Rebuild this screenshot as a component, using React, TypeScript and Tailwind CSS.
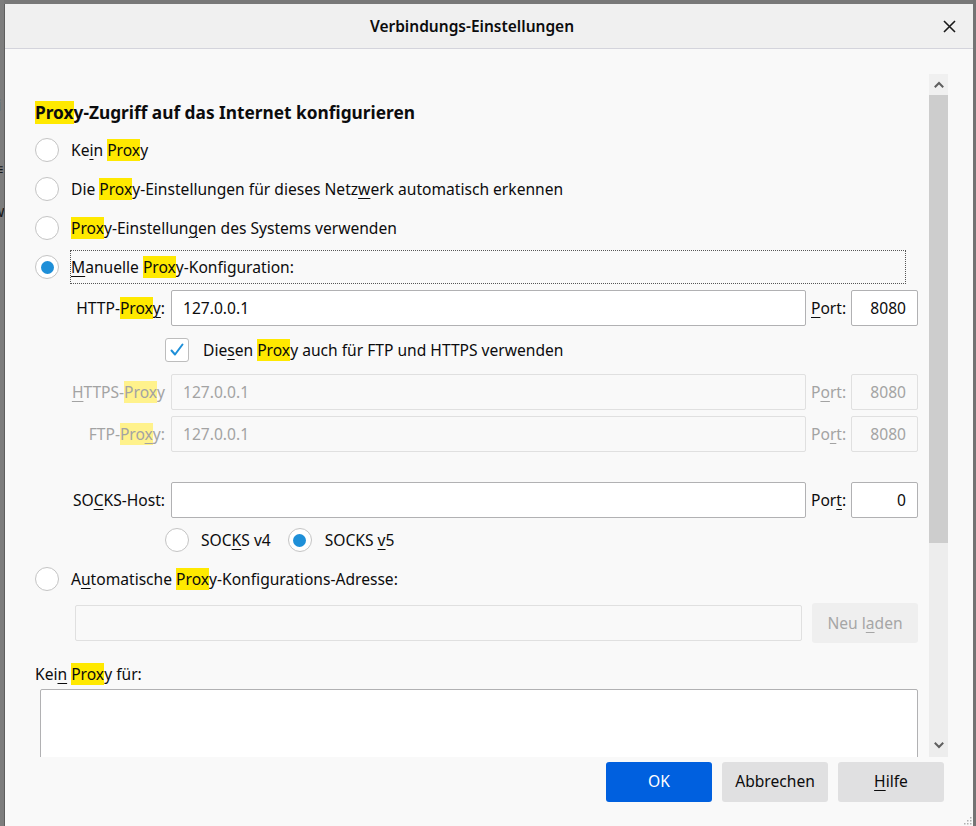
import React from 'react'

const Hl = ({ children, dim }: { children: React.ReactNode; dim?: boolean }) => (
  <span className={dim ? 'bg-[#fff28c]' : 'bg-[#ffe900]'}>{children}</span>
)

const U = ({ children }: { children: React.ReactNode }) => (
  <span className="underline decoration-1 underline-offset-[3px]">{children}</span>
)

const Radio = ({ checked }: { checked?: boolean }) => (
  <div className="w-6 h-6 shrink-0 rounded-full border border-[#c4c4c4] bg-white flex items-center justify-center">
    {checked && <div className="w-[13px] h-[13px] rounded-full bg-[#1e8fd8]" />}
  </div>
)

const Checkbox = () => (
  <div className="w-6 h-6 shrink-0 rounded-[3px] border border-[#bdbdbd] bg-white flex items-center justify-center">
    <svg width="16" height="16" viewBox="0 0 16 16" fill="none">
      <path d="M2.5 8.5 L6 12.5 L13.5 2.5" stroke="#1e8fd8" strokeWidth="2" strokeLinecap="round" strokeLinejoin="round" />
    </svg>
  </div>
)

const Field = ({ value, disabled, className }: { value?: string; disabled?: boolean; className: string }) => (
  <div
    className={`h-9 rounded-[2px] border flex items-center ${
      disabled ? 'border-[#e0e0e0] bg-[#f9f9f9] text-[#a3a3a3]' : 'border-[#b1b1b3] bg-white text-[#0c0c0d]'
    } ${className}`}
  >
    {value}
  </div>
)

const ProxyRow = ({
  label,
  port,
  portLabel,
  value,
  disabled,
}: {
  label: React.ReactNode
  port: string
  portLabel: React.ReactNode
  value?: string
  disabled?: boolean
}) => (
  <div className={`h-9 flex items-center ${disabled ? 'text-[#a3a3a3]' : 'text-[#0c0c0d]'}`}>
    <div className="w-[130px] text-right whitespace-nowrap">{label}</div>
    <Field value={value} disabled={disabled} className="ml-[6px] w-[635px] pl-[11px]" />
    <div className="w-[35px] ml-[5px] whitespace-nowrap">{portLabel}</div>
    <Field value={port} disabled={disabled} className="ml-[5px] w-[67px] justify-end pr-[11px]" />
  </div>
)

const Chevron = ({ up }: { up?: boolean }) => (
  <svg width="10" height="7" viewBox="0 0 10 7" fill="none">
    <path
      d={up ? 'M1.5 5.5 L5 2 L8.5 5.5' : 'M1.5 1.5 L5 5 L8.5 1.5'}
      stroke="#5f5f5f"
      strokeWidth="2"
      strokeLinecap="square"
    />
  </svg>
)

export default function App() {
  return (
    <div className="w-[976px] h-[826px] bg-[#787878] flex overflow-hidden font-['Noto_Sans',sans-serif] text-[#0c0c0d]">
      <div className="w-[4px] shrink-0 overflow-hidden bg-[#7d7d7d] text-[#1a1a1a] text-[16px] leading-none">
        <div className="mt-[97px] -ml-[3px]">i</div>
        <div className="mt-[48px] -ml-[6px]">≡</div>
        <div className="mt-[26px] -ml-[8px]">w</div>
      </div>
      <div className="w-[969px] mt-[4px] bg-[#f9f9f9] border-l border-[#5e5e5e] rounded-tr-[3px] flex flex-col">
        <div className="h-[45px] shrink-0 bg-[#f0f0f0] border-b border-[#d4d4dc] flex items-center relative">
          <div className="flex-1 text-center text-[15.5px] font-semibold pr-[34px] pt-[2px]">Verbindungs-Einstellungen</div>
          <svg className="absolute right-[17px] top-[16px]" width="13" height="13" viewBox="0 0 13 13">
            <path d="M1 1 L12 12 M12 1 L1 12" stroke="#1a1a1a" strokeWidth="1.6" />
          </svg>
        </div>

        <div className="flex mt-[25px] h-[683px] shrink-0 overflow-hidden">
          <div className="flex-1 pl-[30px] text-[15.6px] leading-[22px] flex flex-col">
            <div className="mt-[26px] h-[26px] flex items-center text-[17.3px] font-bold">
              <span className="leading-[25px]">
                <Hl>Prox</Hl>y-Zugriff auf das Internet konfigurieren
              </span>
            </div>

            <div className="mt-[13px] h-6 flex items-center gap-3">
              <Radio />
              <span>
                Ke<U>i</U>n <Hl>Prox</Hl>y
              </span>
            </div>
            <div className="mt-[15px] h-6 flex items-center gap-3">
              <Radio />
              <span>
                Die <Hl>Prox</Hl>y-Einstellungen für dieses Netz<U>w</U>erk automatisch erkennen
              </span>
            </div>
            <div className="mt-[15px] h-6 flex items-center gap-3">
              <Radio />
              <span>
                <Hl>Prox</Hl>y-Einstellun<U>g</U>en des Systems verwenden
              </span>
            </div>
            <div className="mt-[10px] h-[34px] flex items-center">
              <Radio checked />
              <div className="ml-[11px] w-[836px] h-[34px] border border-dotted border-[#555] flex items-center">
                <span>
                  <U>M</U>anuelle <Hl>Prox</Hl>y-Konfiguration:
                </span>
              </div>
            </div>

            <div className="mt-[6px]">
              <ProxyRow
                label={
                  <>
                    HTTP-<Hl>Prox</Hl>
                    <U>y</U>:
                  </>
                }
                portLabel={
                  <>
                    <U>P</U>ort:
                  </>
                }
                value="127.0.0.1"
                port="8080"
              />
            </div>

            <div className="mt-[12px] h-6 flex items-center pl-[130px]">
              <Checkbox />
              <span className="ml-[14px]">
                Die<U>s</U>en <Hl>Prox</Hl>y auch für FTP und HTTPS verwenden
              </span>
            </div>

            <div className="mt-[12px]">
              <ProxyRow
                disabled
                label={
                  <>
                    <U>H</U>TTPS-<Hl dim>Prox</Hl>y
                  </>
                }
                portLabel={
                  <>
                    P<U>o</U>rt:
                  </>
                }
                value="127.0.0.1"
                port="8080"
              />
            </div>
            <div className="mt-[6px]">
              <ProxyRow
                disabled
                label={
                  <>
                    FTP-<Hl dim>Pro</Hl>
                    <span className="bg-[#fff28c]">
                      <U>x</U>
                    </span>
                    y:
                  </>
                }
                portLabel={
                  <>
                    Po<U>r</U>t:
                  </>
                }
                value="127.0.0.1"
                port="8080"
              />
            </div>

            <div className="mt-[30px]">
              <ProxyRow
                label={
                  <>
                    SO<U>C</U>KS-Host:
                  </>
                }
                portLabel={
                  <>
                    Por<U>t</U>:
                  </>
                }
                port="0"
              />
            </div>

            <div className="mt-[10px] h-6 flex items-center pl-[130px]">
              <Radio />
              <span className="ml-[12px]">
                SOC<U>K</U>S v4
              </span>
              <div className="ml-[17px]">
                <Radio checked />
              </div>
              <span className="ml-[13px]">
                SOCKS <U>v</U>5
              </span>
            </div>

            <div className="mt-[15px] h-6 flex items-center gap-3">
              <Radio />
              <span>
                A<U>u</U>tomatische <Hl>Prox</Hl>y-Konfigurations-Adresse:
              </span>
            </div>

            <div className="mt-[12px] h-10 flex items-center pl-[40px]">
              <Field disabled className="w-[727px]" />
              <div className="ml-[10px] w-[106px] h-10 rounded-[3px] bg-[#efefef] text-[#a6a6a6] flex items-center justify-center">
                Neu l<U>a</U>den
              </div>
            </div>

            <div className="mt-[21px] h-5 flex items-center">
              <span>
                Kei<U>n</U> <Hl>Prox</Hl>y für:
              </span>
            </div>

            <div className="mt-[5px] ml-[5px] w-[878px] h-[120px] shrink-0 bg-white border border-[#b1b1b3] rounded-[2px]" />
          </div>

          <div className="w-[19px] mr-[25px] shrink-0 flex flex-col bg-[#ededed]">
            <div className="h-[21px] flex items-center justify-center bg-[#f0f0f0]">
              <Chevron up />
            </div>
            <div className="h-[448px] bg-[#cdcdcd]" />
            <div className="flex-1 flex flex-col justify-end items-center pb-[8px]">
              <Chevron />
            </div>
          </div>
        </div>

        <div className="flex-1 flex justify-end items-start pt-[5px] pr-[29px] gap-[10px] text-[15.6px] relative">
          <button className="w-[106px] h-10 rounded-[3px] bg-[#0060df] text-white">OK</button>
          <button className="w-[106px] h-10 rounded-[3px] bg-[#e0e0e1] text-[#0c0c0d]">Abbrechen</button>
          <button className="w-[106px] h-10 rounded-[3px] bg-[#e0e0e1] text-[#0c0c0d]">
            <U>H</U>ilfe
          </button>
          <svg className="absolute right-[1px] bottom-[1px]" width="8" height="8" viewBox="0 0 8 8">
            <rect x="6" y="0" width="1.5" height="1.5" fill="#b0b0b0" />
            <rect x="3" y="3" width="1.5" height="1.5" fill="#b0b0b0" />
            <rect x="6" y="3" width="1.5" height="1.5" fill="#b0b0b0" />
            <rect x="0" y="6" width="1.5" height="1.5" fill="#b0b0b0" />
            <rect x="3" y="6" width="1.5" height="1.5" fill="#b0b0b0" />
            <rect x="6" y="6" width="1.5" height="1.5" fill="#b0b0b0" />
          </svg>
        </div>
      </div>
      <div className="flex-1 bg-[#747474]" />
    </div>
  )
}
